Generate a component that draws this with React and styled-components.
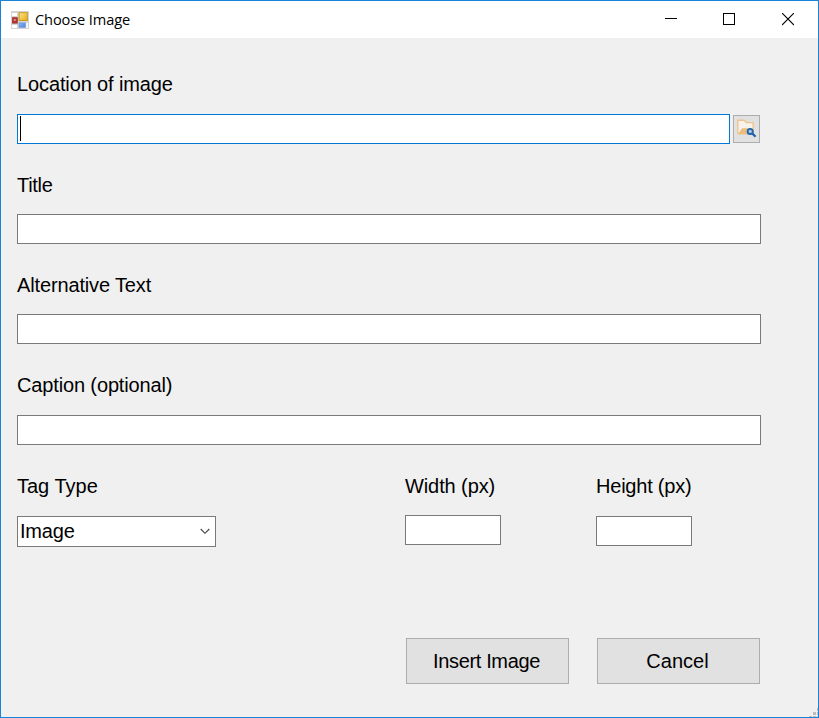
import React from "react";
import styled, { createGlobalStyle } from "styled-components";

const GlobalStyle = createGlobalStyle`
  *, *::before, *::after { box-sizing: border-box; }
  body { margin: 0; background: #f0f0f0; }
`;

const Window = styled.main`
  position: relative;
  width: 819px;
  height: 718px;
  display: flex;
  flex-direction: column;
  overflow: hidden;
  border: 1px solid #1883d7;
  background: #f0f0f0;
  color: #000;
  font: 20px/24px "Liberation Sans", Arial, sans-serif;
`;

const TitleBar = styled.header`
  flex: none;
  height: 37px;
  display: flex;
  align-items: center;
  padding-left: 10px;
  background: #fff;
`;

const Title = styled.h1`
  flex: 1;
  margin: 0 0 2px 6px;
  font: 400 14.6px/20px "Open Sans", "Noto Sans", sans-serif;
  letter-spacing: ${(p) => p.$tracking}px;
`;

const Controls = styled.div`
  display: flex;
  height: 100%;
`;

const ControlButton = styled.button`
  width: ${(p) => p.$width}px;
  height: 100%;
  display: flex;
  align-items: center;
  justify-content: center;
  padding: 0;
  border: 0;
  background: transparent;
`;

const Form = styled.form`
  flex: 1;
  display: flex;
  flex-direction: column;
  padding: 34px 57px 0 16px;
`;

const Field = styled.div`
  display: flex;
  flex-direction: column;
  width: ${(p) => p.$width || 744}px;
  gap: ${(p) => p.$gap || 18}px;
  margin-bottom: ${(p) => p.$after || 0}px;
`;

const Label = styled.label`
  display: block;
  height: 24px;
  white-space: nowrap;
  letter-spacing: ${(p) => p.$tracking || 0}px;
`;

const InputRow = styled.div`
  display: flex;
  gap: 3px;
  height: 30px;
`;

const TextBox = styled.div`
  display: flex;
  align-items: center;
  width: ${(p) => p.$width || "100%"};
  height: 30px;
  padding-left: 2px;
  border: 1px solid ${(p) => (p.$focused ? "#0078d7" : "#7a7a7a")};
  background: #fff;
`;

const Caret = styled.span`
  width: 1px;
  height: 25px;
  margin-top: -1px;
  background: #000;
`;

const BrowseButton = styled.button`
  display: block;
  width: 27px;
  height: 28px;
  margin-top: 1px;
  padding: 0;
  border: 1px solid #adadad;
  background: #e1e1e1;
  svg { display: block; }
`;

const Options = styled.div`
  display: grid;
  grid-template-columns: 388px 191px 96px;
  height: 164px;
`;

const ComboBox = styled.div`
  display: flex;
  align-items: center;
  justify-content: space-between;
  width: 199px;
  height: 31px;
  padding: 0 5px 0 2px;
  border: 1px solid #7a7a7a;
  background: #fff;
  letter-spacing: -0.2px;
`;

const ComboValue = styled.span`
  padding-bottom: 2px;
`;

const Actions = styled.div`
  display: flex;
  gap: 28px;
  margin-left: 389px;
`;

const ActionButton = styled.button`
  width: 163px;
  height: 46px;
  padding: 0 2px 0 0;
  border: 1px solid #adadad;
  background: #e1e1e1;
  color: #000;
  font: inherit;
  letter-spacing: ${(p) => p.$tracking || 0}px;
`;

const SizeGrip = styled.svg`
  position: absolute;
  right: 0;
  bottom: 0;
`;

const FormIcon = () => (
  <svg width="18" height="18" viewBox="0 0 18 18">
    <defs>
      <linearGradient id="gold" x2="1" y2="1">
        <stop stopColor="#ffe58a" />
        <stop offset="1" stopColor="#e3ab1c" />
      </linearGradient>
      <linearGradient id="blue" x2="1" y2="1">
        <stop stopColor="#8db8f6" />
        <stop offset="1" stopColor="#4a80e0" />
      </linearGradient>
    </defs>
    <rect width="18" height="18" fill="#d6d4d2" />
    <rect x="1" y="2" width="5" height="3" fill="#fff" />
    <rect x="1" y="14" width="5" height="3" fill="#fff" />
    <rect x="15" y="12" width="2" height="5" fill="#f4f4f4" />
    <rect x="8.1" y="1.7" width="8.2" height="7.8" fill="url(#gold)" stroke="#c99a20" />
    <rect x="1.5" y="6.7" width="4.8" height="5.4" fill="#b83030" stroke="#a04040" />
    <rect x="2.8" y="8" width="2" height="2" fill="#e98a8a" />
    <rect x="8.2" y="12" width="6" height="4.2" fill="url(#blue)" stroke="#6a98e4" />
  </svg>
);

const BrowseIcon = () => (
  <svg width="25" height="26" viewBox="0 0 25 26">
    <path d="M3.8 17.5V4.2h6.5l2 2.4h6.9v11H3.8Z" fill="#f8f3ea" stroke="#ecc58c" strokeWidth="1.4" />
    <path d="M4 18.2 8 12.2h8v6Z" fill="#e9bd7d" />
    <circle cx="16.2" cy="15.4" r="2.6" fill="#a9c9e8" stroke="#1f63ae" strokeWidth="1.8" />
    <path d="m18.2 17.4 3.4 3.4" stroke="#1f63ae" strokeWidth="2.2" />
  </svg>
);

export default function App() {
  return (
    <>
      <GlobalStyle />
      <Window>
        <TitleBar>
          <FormIcon />
          <Title $tracking={-0.12}>Choose Image</Title>
          <Controls>
            <ControlButton $width={58} aria-label="Minimize">
              <svg width="12" height="13" shapeRendering="crispEdges">
                <path d="M0 5.5h12" stroke="#000" />
              </svg>
            </ControlButton>
            <ControlButton $width={58} aria-label="Maximize">
              <svg width="12" height="13" shapeRendering="crispEdges">
                <path d="M.5.5h11v11H.5Z" fill="none" stroke="#000" />
              </svg>
            </ControlButton>
            <ControlButton $width={60} aria-label="Close">
              <svg width="12" height="13">
                <path d="m0 0 12 12M12 0 0 12" stroke="#000" strokeWidth="1.1" />
              </svg>
            </ControlButton>
          </Controls>
        </TitleBar>
        <Form onSubmit={(e) => e.preventDefault()}>
          <Field $after={29}>
            <Label $tracking={-0.12}>Location of image</Label>
            <InputRow>
              <TextBox $width="713px" $focused>
                <Caret />
              </TextBox>
              <BrowseButton type="button" aria-label="Browse">
                <BrowseIcon />
              </BrowseButton>
            </InputRow>
          </Field>
          <Field $gap={17} $after={29}>
            <Label $tracking={-0.3}>Title</Label>
            <TextBox />
          </Field>
          <Field $gap={17} $after={29}>
            <Label $tracking={-0.14}>Alternative Text</Label>
            <TextBox />
          </Field>
          <Field $after={29}>
            <Label $tracking={-0.14}>Caption (optional)</Label>
            <TextBox />
          </Field>
          <Options>
            <Field $width={199}>
              <Label>Tag Type</Label>
              <ComboBox>
                <ComboValue>Image</ComboValue>
                <svg width="10" height="7" viewBox="0 0 10 7">
                  <path d="m.7 1 4.3 4.3L9.3 1" fill="none" stroke="#444" strokeWidth="1.1" />
                </svg>
              </ComboBox>
            </Field>
            <Field $width={96} $gap={17}>
              <Label $tracking={-0.1}>Width (px)</Label>
              <TextBox />
            </Field>
            <Field $width={96}>
              <Label $tracking={-0.22}>Height (px)</Label>
              <TextBox />
            </Field>
          </Options>
          <Actions>
            <ActionButton $tracking={-0.35}>Insert Image</ActionButton>
            <ActionButton type="button">Cancel</ActionButton>
          </Actions>
        </Form>
        <SizeGrip width="9" height="9" viewBox="0 0 9 9" fill="#bdbdbd" shapeRendering="crispEdges">
          <path d="M8 0h1v3H8zM4 4h3v3H4zM8 4h1v3H8zM0 8h3v1H0zM4 8h3v1H4zM8 8h1v1H8z" />
        </SizeGrip>
      </Window>
    </>
  );
}
